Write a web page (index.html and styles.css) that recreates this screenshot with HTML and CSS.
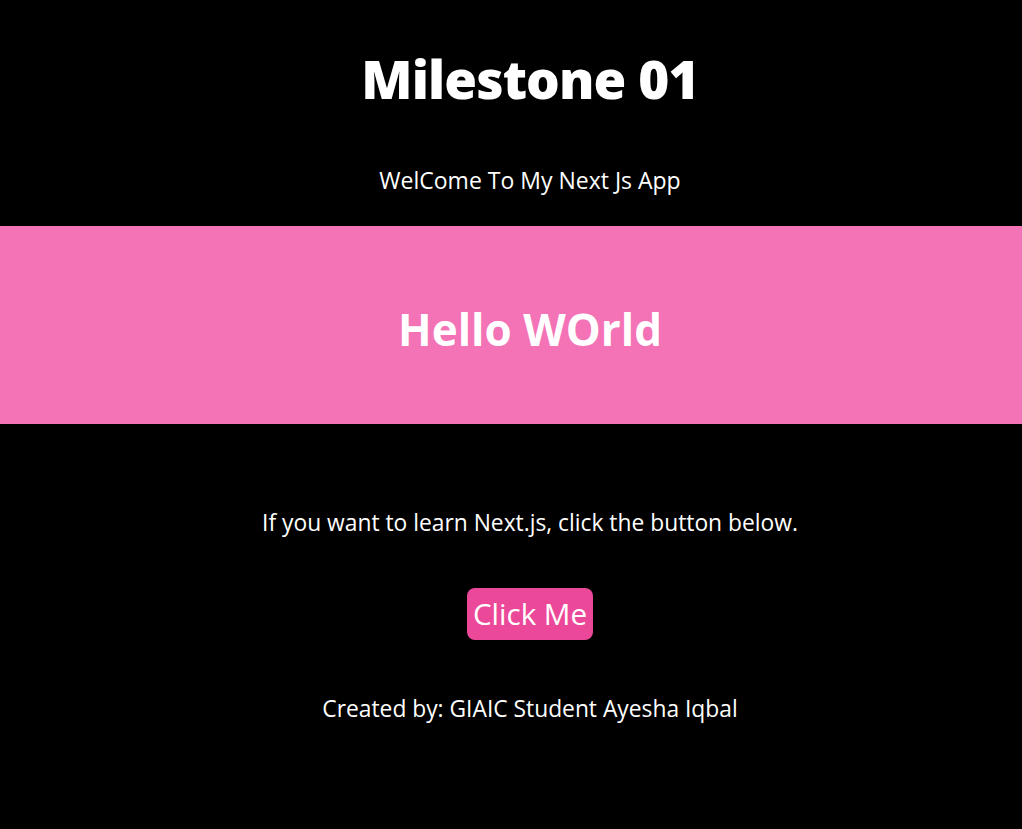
FILE: index.html
```html
<!DOCTYPE html>
<html lang="en">
<head>
<meta charset="utf-8">
<title>Milestone 01</title>
<link rel="stylesheet" href="styles.css">
</head>
<body>
  <header class="top">
    <h1 class="title">Milestone 01</h1>
    <p class="welcome">WelCome To My Next Js App</p>
  </header>
  <section class="band">
    <h2 class="hello">Hello WOrld</h2>
  </section>
  <main class="content">
    <p class="lead">If you want to learn Next.js, click the button below.</p>
    <button class="btn" type="button">Click Me</button>
    <p class="credit">Created by: GIAIC Student Ayesha Iqbal</p>
  </main>
</body>
</html>
```

FILE: styles.css
```css
html, body {
  margin: 0;
  padding: 0;
  background: #000;
  color: #fff;
  font-family: "Open Sans", "Noto Sans", sans-serif;
  min-height: 100vh;
}

.top,
.band,
.content {
  box-sizing: border-box;
  padding-left: 38px;
}

.top {
  display: flex;
  flex-direction: column;
  align-items: center;
  padding-top: 51px;
}

.title {
  margin: 0;
  font-size: 53px;
  line-height: 56px;
  font-weight: 800;
  letter-spacing: -0.9px;
}

.welcome {
  margin: 57px 0 0;
  font-size: 23px;
  line-height: 32px;
}

.band {
  margin-top: 30px;
  height: 198px;
  padding-top: 8px;
  background: #f472b6;
  display: flex;
  align-items: center;
  justify-content: center;
}

.hello {
  margin: 0;
  font-size: 44px;
  line-height: 48px;
  font-weight: 700;
}

.content {
  display: flex;
  flex-direction: column;
  align-items: center;
}

.lead {
  margin: 83px 0 0;
  font-size: 22.8px;
  line-height: 32px;
}

.btn {
  margin-top: 49px;
  height: 52px;
  padding: 0 6px;
  border: 0;
  border-radius: 8px;
  background: #ec4899;
  color: #fff;
  font-family: inherit;
  font-size: 29.6px;
  line-height: 36px;
}

.credit {
  margin: 53px 0 0;
  font-size: 22.8px;
  line-height: 32px;
}
```
